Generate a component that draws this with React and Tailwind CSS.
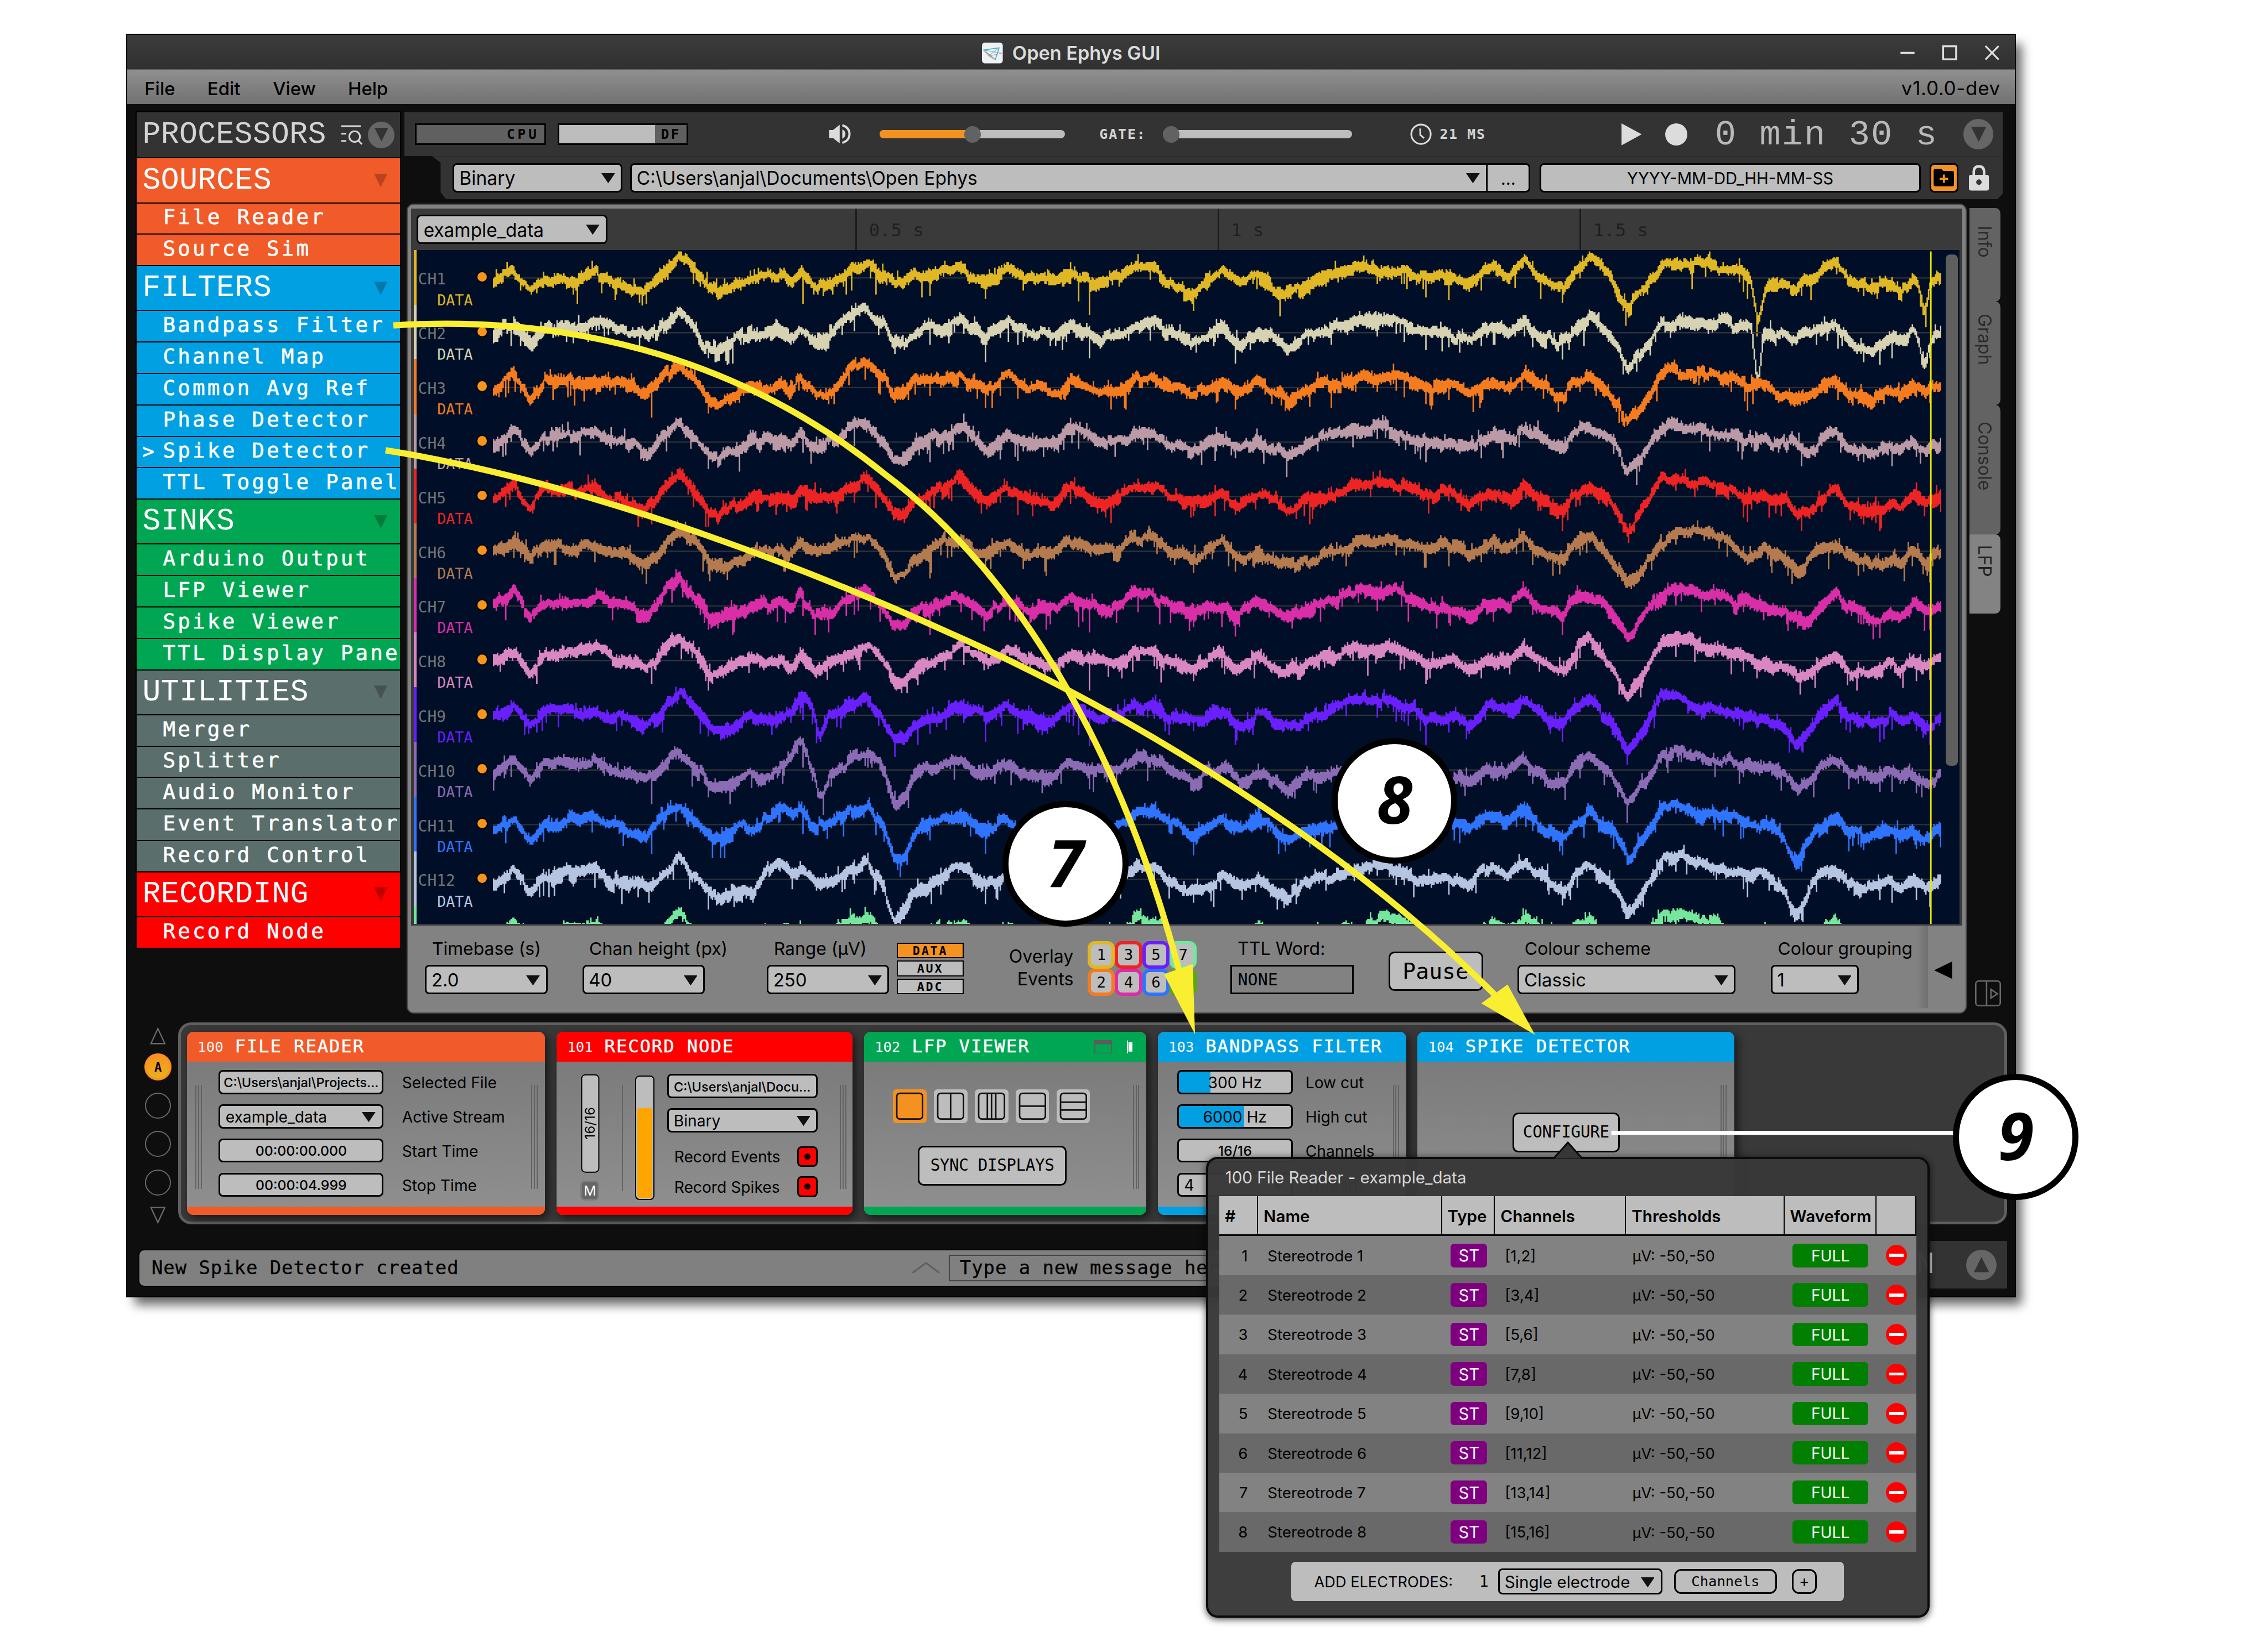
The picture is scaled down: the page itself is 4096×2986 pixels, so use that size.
import React from "react";

const inter = "font-['Inter',sans-serif]";
const mono = "font-['DejaVu_Sans_Mono',monospace]";
const thin = "font-['Liberation_Mono',monospace]";

const Tri = ({ className = "", dir = "down" }) => {
  const pts = {
    down: "0,0 10,0 5,10",
    up: "0,10 10,10 5,0",
    left: "10,0 10,10 0,5",
    right: "0,0 0,10 10,5",
  };
  return (
    <svg viewBox="0 0 10 10" preserveAspectRatio="none" className={"shrink-0 " + className} fill="currentColor">
      <polygon points={pts[dir]} />
    </svg>
  );
};

const Combo = ({ className = "", children }) => (
  <div className={`${inter} flex shrink-0 items-center justify-between rounded-[3px] border-[1.2px] border-black bg-[#bdbdbd] pt-[0.8px] text-black ${className}`}>
    <span className="whitespace-nowrap">{children}</span>
    <Tri className="h-[7px] w-[9.5px] text-[#111]" />
  </div>
);

const Field = ({ className = "", children }) => (
  <div className={`${inter} flex shrink-0 items-center justify-center overflow-hidden whitespace-nowrap rounded-[3px] border-[1.2px] border-black bg-[#bdbdbd] pt-[0.8px] text-black ${className}`}>
    {children}
  </div>
);

/* ---------- processor list ---------- */
const GROUPS = [
  { name: "SOURCES", bg: "bg-[#f15a29]", tri: "text-[#b8441f]", items: ["File Reader", "Source Sim"] },
  {
    name: "FILTERS", bg: "bg-[#00a0e3]", tri: "text-[#0079aa]",
    items: ["Bandpass Filter", "Channel Map", "Common Avg Ref", "Phase Detector", "Spike Detector", "TTL Toggle Panel"],
  },
  { name: "SINKS", bg: "bg-[#00a651]", tri: "text-[#007d3d]", items: ["Arduino Output", "LFP Viewer", "Spike Viewer", "TTL Display Panel"] },
  { name: "UTILITIES", bg: "bg-[#5a6e6c]", tri: "text-[#445351]", items: ["Merger", "Splitter", "Audio Monitor", "Event Translator", "Record Control"] },
  { name: "RECORDING", bg: "bg-[#ff0000]", tri: "text-[#bf0000]", items: ["Record Node"] },
];

const Sidebar = () => (
  <div className="mt-[5px] flex h-[579.2px] w-[183.7px] shrink-0 flex-col overflow-hidden border-x-[0.8px] border-t-[0.8px] border-black bg-black">
    <div className="flex h-[31px] shrink-0 items-center bg-[#333] pl-[4px]">
      <span className={`${thin} w-[138px] text-[21px] leading-none tracking-[0.12px] text-[#d4d4d4]`}>PROCESSORS</span>
      <svg viewBox="0 0 15 14" className="-ml-[0.5px] h-[14px] w-[15px] shrink-0" fill="none" stroke="#d4d4d4" strokeWidth="1.2">
        <path d="M0 .8H13.5M0 6H3.4M0 11H3.4" />
        <circle cx="9.2" cy="8" r="3.7" />
        <path d="M11.8 10.8L14.3 13.3" />
      </svg>
      <span className="ml-[3.4px] flex size-[18.6px] items-center justify-center rounded-full bg-[#666]">
        <Tri className="h-[9.5px] w-[9.5px] text-[#333]" />
      </span>
    </div>
    {GROUPS.map((g) => (
      <React.Fragment key={g.name}>
        <div className={`mt-[0.8px] flex h-[30.3px] shrink-0 items-center justify-between pl-[4px] pr-[8.5px] ${g.bg}`}>
          <span className={`${thin} text-[21px] leading-none tracking-[0.18px] text-white`}>{g.name}</span>
          <Tri className={`h-[9.3px] w-[9.3px] ${g.tri}`} />
        </div>
        {g.items.map((it) => (
          <div key={it} className={`mt-[0.8px] flex h-[20.95px] shrink-0 items-center overflow-hidden pb-[1.4px] ${g.bg}`}>
            <span className={`${mono} w-[18.2px] shrink-0 pl-[4px] text-[13.5px] leading-none text-white [-webkit-text-stroke:0.3px_white]`}>{it === "Spike Detector" ? ">" : ""}</span>
            <span className={`${mono} whitespace-nowrap text-[14.4px] leading-none tracking-[1.58px] text-white [-webkit-text-stroke:0.25px_white]`}>{it}</span>
          </div>
        ))}
      </React.Fragment>
    ))}
  </div>
);

/* ---------- control panel ---------- */
const Pixel = ({ className = "", children }) => (
  <span className={`${mono} whitespace-nowrap font-bold leading-none ${className}`}>{children}</span>
);

const ControlPanel = () => (
  <div className="mt-[5.6px] flex flex-col">
    <div className="flex h-[30.4px] w-[1106px] items-center bg-[#333] pl-[7.4px]">
      <div className="flex h-[14.8px] w-[90.5px] items-center justify-end border-[1.2px] border-black bg-[#606060] pr-[3.5px] pt-[0.6px]">
        <Pixel className="text-[9.3px] tracking-[1.9px] text-black">CPU</Pixel>
      </div>
      <div className="ml-[8px] flex h-[14.8px] w-[90.5px] items-center justify-between border-[1.2px] border-black bg-[#606060] pr-[4px]">
        <div className="h-full w-[66.5px] bg-[#bdbdbd]" />
        <Pixel className="pt-[0.6px] text-[9.3px] tracking-[1.3px] text-black">DF</Pixel>
      </div>
      <svg viewBox="0 0 15 14" className="ml-[97.5px] h-[14px] w-[15px] shrink-0">
        <path d="M0 4.2H2.6L7.2 0.6V13.4L2.6 9.8H0Z" fill="#dcdcdc" />
        <path d="M9 3.8Q11.2 5 11.2 7T9 10.2Z" fill="#dcdcdc" />
        <path d="M9 .9Q14 2.4 14 7T9 13.1" fill="none" stroke="#dcdcdc" strokeWidth="1.5" />
      </svg>
      <div className="ml-[20px] flex h-[6px] w-[128.2px] items-center overflow-visible rounded-full bg-[#bdbdbd]">
        <div className="h-full w-[60px] rounded-l-full bg-[#f39220]" />
        <div className="-ml-[1.5px] size-[11.4px] shrink-0 rounded-full bg-[#626262]" />
      </div>
      <Pixel className="ml-[23.8px] w-[44px] pt-[0.8px] text-[9.5px] tracking-[0.75px] text-[#d4d4d4]">GATE:</Pixel>
      <div className="flex h-[6px] w-[131px] items-center rounded-full bg-[#bdbdbd]">
        <div className="size-[11.4px] shrink-0 rounded-full bg-[#626262]" />
      </div>
      <svg viewBox="0 0 15 15" className="ml-[40px] size-[15px] shrink-0" fill="none" stroke="#dcdcdc" strokeWidth="1.2">
        <circle cx="7.5" cy="7.5" r="6.7" />
        <path d="M7 3.5V8L9.6 10.3" />
      </svg>
      <Pixel className="ml-[5.5px] w-[125.8px] pt-[0.8px] text-[9.5px] tracking-[0.65px] text-[#d4d4d4]">21 MS</Pixel>
      <Tri dir="right" className="h-[15.2px] w-[14px] text-[#dcdcdc]" />
      <div className="ml-[16.4px] size-[15.2px] shrink-0 rounded-full bg-[#dcdcdc]" />
      <span className={`${thin} ml-[19px] w-[172px] whitespace-pre pt-[2px] text-[24.4px] leading-none tracking-[0.8px] text-[#b9b9b9]`}>0 min 30 s</span>
      <span className="flex size-[20.8px] shrink-0 items-center justify-center rounded-full bg-[#666]">
        <Tri className="h-[10.5px] w-[10.5px] text-[#333]" />
      </span>
    </div>
    <div className="flex h-[29.9px] w-[1106px] items-center bg-[#333] pl-[33.3px] [clip-path:polygon(19px_0,1106px_0,1106px_26px,1102px_29.9px,29px_29.9px,25px_25px,25px_4.5px)]">
      <Combo className="h-[20.2px] w-[117.4px] pl-[3.5px] pr-[4px] text-[12.9px]">Binary</Combo>
      <Combo className="ml-[5.3px] h-[20.2px] w-[593.4px] rounded-r-none pl-[3.5px] pr-[4px] text-[12.85px]">C:\Users\anjal\Documents\Open Ephys</Combo>
      <Field className="-ml-[1px] h-[20.2px] w-[30.7px] rounded-l-none pt-[1.6px] text-[12px]">...</Field>
      <Field className="ml-[6.3px] h-[20.2px] w-[264px] text-[11.2px]">YYYY-MM-DD_HH-MM-SS</Field>
      <div className="ml-[5.8px] flex h-[20.2px] w-[19.9px] items-center justify-center rounded-[3px] border-[1.2px] border-black bg-[#f39220]">
        <svg viewBox="0 0 14 12" className="h-[12.2px] w-[14.4px]">
          <path d="M1.5 0H5.2L6.6 1.5H12.5Q14 1.5 14 3V10.5Q14 12 12.5 12H1.5Q0 12 0 10.5V1.5Q0 0 1.5 0Z" fill="#000" />
          <path d="M7 4V9.6M4.2 6.8H9.8" stroke="#f39220" strokeWidth="1.4" />
        </svg>
      </div>
      <svg viewBox="0 0 14 18" className="ml-[7px] h-[17.8px] w-[14.6px]">
        <path d="M3.4 8V5Q3.4 1 7 1T10.6 5V8" fill="none" stroke="#dcdcdc" strokeWidth="1.8" />
        <path d="M1.4 7H12.6Q14 7 14 8.4V16.4Q14 18 12.6 18H1.4Q0 18 0 16.4V8.4Q0 7 1.4 7ZM7 10.2A1.9 1.9 0 1 0 7 14A1.9 1.9 0 1 0 7 10.2Z" fill="#dcdcdc" fillRule="evenodd" />
      </svg>
    </div>
  </div>
);

/* ---------- LFP traces ---------- */
const COLORS = ["#e0b724", "#d6d2b2", "#f57b1f", "#bb9aa5", "#ee2424", "#b57b4f", "#da2ea8", "#d987c2", "#6a1fff", "#8c6bb5", "#2f74ff", "#b5c4e1", "#75e79d"];
const LABEL = ["text-[#e0b724]", "text-[#d6d2b2]", "text-[#f57b1f]", "text-[#bb9aa5]", "text-[#ee2424]", "text-[#b57b4f]", "text-[#da2ea8]", "text-[#d987c2]", "text-[#6a1fff]", "text-[#8c6bb5]", "text-[#2f74ff]", "text-[#b5c4e1]"];
const STRIP = ["bg-[#e0b724]", "bg-[#d6d2b2]", "bg-[#f57b1f]", "bg-[#bb9aa5]", "bg-[#ee2424]", "bg-[#b57b4f]", "bg-[#da2ea8]", "bg-[#d987c2]", "bg-[#6a1fff]", "bg-[#8c6bb5]", "bg-[#2f74ff]", "bg-[#b5c4e1]", "bg-[#75e79d]"];

/* field-potential key points: [position, deflection] pairs for each half of the sweep */
const LEFT = [20, 10, 65, -30, 100, 38, 130, -10, 165, -12, 200, -20, 240, -28, 270, 0, 300, 8, 350, 38, 385, -20, 420, -75, 450, -25, 490, 55, 515, 48, 550, 18, 580, 0, 640, -5, 660, 12, 680, -25, 715, 22, 750, 10, 790, -35, 825, -52, 860, 10, 880, 70, 905, 65, 925, 20, 960, 0, 990, -20, 1025, -35, 1055, -5, 1080, 15, 1125, -28, 1160, 5, 1200, 0, 1230, 15, 1260, -25, 1290, -10, 1330, 15, 1370, 0, 1400, -30, 1440, -35, 1470, 5, 1520, 35];
const RIGHT = [0, 10, 25, -15, 60, 30, 95, -10, 120, 15, 155, 50, 200, 10, 240, -10, 280, -30, 345, -42, 390, -20, 430, 5, 470, 0, 505, 22, 550, -25, 585, 0, 613, -50, 645, 5, 690, 32, 710, -20, 740, -52, 780, 10, 815, 108, 845, 50, 880, -42, 915, -58, 960, -38, 1000, -30, 1040, -10, 1090, 0, 1120, 15, 1145, 70, 1165, 45, 1190, -5, 1220, -35, 1245, 20, 1290, 42, 1325, 12, 1345, 30, 1370, 0, 1395, 35, 1412, 15, 1426, 0];
const KEYS = [];
for (let i = 0; i < LEFT.length; i += 2) KEYS.push([334.5 + LEFT[i] * 0.32222, LEFT[i + 1] * 0.2022]);
for (let i = 0; i < RIGHT.length; i += 2) KEYS.push([836.3 + RIGHT[i] * 0.35556, RIGHT[i + 1] * 0.2022]);

/* per-channel [centre x, half width, offset] adjustments */
const BUMPS = [
  [[593, 14, 4], [622, 14, -10], [1216, 4, 28], [1226, 8, 6], [1245, 8, -8], [1331, 3, 16], [1165, 20, 2]],
  [[593, 16, -3], [622, 14, -7], [1216, 2.5, 32], [1245, 8, -10], [1331, 4, 14]],
  [[594, 12, -9], [622, 14, -7], [1243, 8, -8]],
  [[595, 14, -2], [665, 5, -5], [1243, 8, -10]],
  [[665, 6, -6], [1205, 4, 4], [1243, 8, -6]],
  [[622, 10, 0], [1205, 6, 4], [1243, 8, -3]],
  [[470, 12, -3], [352, 14, -3], [1250, 10, 4], [1243, 6, -6]],
  [[1165, 18, -2], [1243, 8, -5]],
  [[555, 8, -11], [567, 3, 12], [1243, 7, 3], [1150, 16, -3]],
  [[552, 9, -14], [568, 4, 12], [621, 8, 10], [528, 8, 6], [1243, 7, 3]],
  [[541, 14, -9], [621, 8, 12], [524, 7, 8], [1241, 8, 10]],
  [[538, 9, -12], [619, 7, 10], [520, 8, 8], [1241, 8, 11], [1155, 20, -6]],
  [[1155, 24, -6]],
];

const rng = (seed) => () => {
  seed = (seed * 1664525 + 1013904223) >>> 0;
  return seed / 4294967296;
};

const X0 = 341.2;
const STEP = 0.935;
const COLS = 1072;

const shared = (() => {
  const r = rng(77);
  const spikes = new Array(COLS).fill(0);
  for (let i = 0; i < COLS; i++) if (r() < 0.04) spikes[i] = 6 + r() * r() * 14;
  return spikes;
})();

const tracePath = (ch) => {
  const r = rng(9001 + ch * 733);
  const cy = 19.3 + ch * 37.83;
  const q = (v) => (Math.round(v / STEP) * STEP).toFixed(2);
  let k = 0, slow = 0, mid = 0, hold = 0, top = 0, bottom = 0, plo = null, phi = null, d = "";
  for (let i = 0; i < COLS; i++) {
    const x = X0 + i * STEP;
    while (k < KEYS.length - 2 && KEYS[k + 1][0] < x) k++;
    const [xa, ya] = KEYS[k], [xb, yb] = KEYS[k + 1];
    const f = Math.min(1, Math.max(0, (x - xa) / (xb - xa)));
    let y = ya + (yb - ya) * f;
    for (const [bx, bw, bo] of BUMPS[ch]) y += bo * Math.exp(-(((x - bx) / bw) ** 2));
    slow = slow * 0.95 + (r() - 0.5) * 2.0;
    if (hold-- <= 0) {
      hold = 2 + Math.floor(r() * 8);
      mid = (r() - 0.5) * 4.2;
      top = r() * 2.2;
      bottom = r() * r() * 5;
    }
    y += slow + mid;
    let lo = y - 1.8 - top - r() * r() * 2.6;
    let hi = y + 1.6 + bottom + r() * r() * 2.6;
    if (shared[i] && r() < 0.55) hi += shared[i] * (0.5 + r() * 0.6);
    else if (r() < 0.05) hi += 3 + r() * 8;
    if (r() < 0.04) lo -= 1.5 + r() * 3.5;
    const nlo = lo, nhi = hi;
    if (plo !== null) {
      if (lo > phi) lo = phi;
      if (hi < plo) hi = plo;
    }
    plo = nlo;
    phi = nhi;
    d += `M${((i + 0.5) * STEP).toFixed(2)} ${q(cy + lo)}V${q(cy + hi)}`;
  }
  return d;
};
const PATHS = COLORS.map((_, i) => tracePath(i));

const ChannelLabels = () => (
  <div className="flex h-[466.3px] w-[53px] flex-col overflow-hidden">
    {LABEL.map((c, i) => (
      <div key={i} className="flex h-[37.83px] shrink-0 flex-col pt-[15.2px]">
        <div className="flex h-[12px] items-center justify-between">
          <span className={`${mono} pl-[1px] text-[10.7px] leading-none text-[#737578]`}>CH{i + 1}</span>
          <span className="mr-[3.6px] size-[8.2px] -translate-y-[1.9px] rounded-full border-[0.8px] border-black bg-[#f7941e]" />
        </div>
        <span className={`${mono} mt-[3.9px] pl-[14.3px] text-[10.2px] leading-none ${c}`}>DATA</span>
      </div>
    ))}
  </div>
);

const Viewer = () => (
  <div className="flex h-[496px] w-[1073.3px] flex-col bg-[#3a3a3a]">
    <div className="flex h-[28.5px] shrink-0 items-center pl-[4px]">
      <Combo className="h-[20px] w-[132px] pl-[3.5px] pr-[4.5px] text-[12.8px]">example_data</Combo>
      <div className={`${mono} ml-[171.4px] flex h-full w-[930px] text-[12.3px] leading-none tracking-[0.2px] text-[#1f1f1f]`}>
        {["0.5 s", "1 s", "1.5 s"].map((t) => (
          <div key={t} className="flex h-full w-[250.6px] shrink-0 items-center border-l-[1.4px] border-[#1c1c1c] pl-[8.3px] pt-[1px]">{t}</div>
        ))}
      </div>
    </div>
    <div className="ml-[2px] flex h-[466.3px] w-[1069.4px] overflow-hidden bg-[#000f27]">
      <div className="flex w-[1.8px] shrink-0 flex-col">
        {STRIP.map((s, i) => (
          <div key={i} className={`h-[37.83px] shrink-0 ${s}`} />
        ))}
      </div>
      <ChannelLabels />
      <svg viewBox="0 0 1002 466.3" className="h-[466.3px] w-[1002px] shrink-0">
        {COLORS.map((c, i) => (
          <React.Fragment key={c}>
            <path d={`M0 ${19.3 + i * 37.83}H1002`} stroke="#2e3237" strokeWidth="0.9" />
            <path d={PATHS[i]} stroke={c} strokeWidth="1" fill="none" />
          </React.Fragment>
        ))}
        <path d="M995 1V466.3" stroke="#e8e800" strokeWidth="1.1" />
      </svg>
      <div className="ml-[3px] mt-[3px] h-[354px] w-[8.6px] rounded-[3px] bg-[#5e5e5e]" />
    </div>
  </div>
);

const EVENT_BTN = [
  ["1", "border-[#e0b724]"], ["3", "border-[#ee2424]"], ["5", "border-[#6a1fff]"], ["7", "border-[#75e79d]"],
  ["2", "border-[#f57b1f]"], ["4", "border-[#da2ea8]"], ["6", "border-[#2f74ff]"], ["8", "border-[#5aaa00]"],
];

const LabeledCombo = ({ label, value, w, ml }) => (
  <div className={`flex shrink-0 flex-col pt-[8.3px] ${ml}`}>
    <span className={`${inter} h-[19px] whitespace-nowrap pl-[4.8px] text-[12.2px] leading-[15px] text-black`}>{label}</span>
    <Combo className={`h-[20.3px] pl-[3.3px] pr-[4px] text-[12.6px] ${w}`}>{value}</Combo>
  </div>
);

const ViewerControls = () => (
  <div className="flex h-[60px] w-[1075px] items-start overflow-hidden">
    <LabeledCombo label="Timebase (s)" value="2.0" w="w-[84.7px]" ml="ml-[9.7px]" />
    <LabeledCombo label="Chan height (px)" value="40" w="w-[84.7px]" ml="w-[84.7px] ml-[24.1px]" />
    <LabeledCombo label="Range (µV)" value="250" w="w-[84.7px]" ml="ml-[43px]" />
    <div className="ml-[5.3px] mt-[11.8px] flex shrink-0 flex-col gap-[1.5px]">
      {[["DATA", "bg-[#f39220]"], ["AUX", "bg-[#bdbdbd]"], ["ADC", "bg-[#bdbdbd]"]].map(([t, bg]) => (
        <div key={t} className={`flex h-[10.9px] w-[46.2px] items-center justify-center border-[1px] border-black pt-[0.6px] ${bg}`}>
          <Pixel className="text-[8.3px] tracking-[1.1px] text-black">{t}</Pixel>
        </div>
      ))}
    </div>
    <div className={`${inter} ml-[24px] mt-[13.8px] flex w-[52px] shrink-0 flex-col text-right text-[12.3px] leading-[15.5px] text-black`}>
      <span>Overlay</span>
      <span>Events</span>
    </div>
    <div className="ml-[9.8px] mt-[10.8px] grid shrink-0 grid-cols-4">
      {EVENT_BTN.map(([n, b]) => (
        <div key={n} className={`flex h-[18.9px] w-[18.9px] items-center justify-center rounded-[5px] border-[2.6px] bg-[#bdbdbd] ${b}`}>
          <span className={`${mono} text-[10.5px] leading-none text-black`}>{n}</span>
        </div>
      ))}
    </div>
    <div className="ml-[23.2px] flex shrink-0 flex-col pt-[8.3px]">
      <span className={`${inter} h-[19px] whitespace-nowrap pl-[5px] text-[12.3px] leading-[15px] text-black`}>TTL Word:</span>
      <div className={`${mono} flex h-[20.3px] w-[85.3px] items-center border-[1.2px] border-black pl-[4px] text-[11.5px] text-black`}>NONE</div>
    </div>
    <div className={`${mono} ml-[24px] mt-[18px] flex h-[27.2px] w-[65.5px] shrink-0 items-center justify-center rounded-[4px] border-[1.2px] border-black bg-[#bdbdbd] text-[15.2px] text-black`}>Pause</div>
    <LabeledCombo label="Colour scheme" value="Classic" w="w-[150.7px]" ml="ml-[24px]" />
    <LabeledCombo label="Colour grouping" value="1" w="w-[60.8px]" ml="ml-[24.5px] w-[101px]" />
    <div className="h-[57px] w-[7.6px] bg-linear-to-r from-[#828282] to-[#707070]" />
    <Tri dir="left" className="ml-[4.5px] mt-[25px] h-[12px] w-[12.5px] text-black" />
  </div>
);

const TABS = [
  ["Info", "h-[64.6px] pt-[12.5px] bg-[#636363] text-[#2a2a2a]"],
  ["Graph", "h-[71.7px] pt-[8.5px] bg-[#636363] text-[#2a2a2a]"],
  ["Console", "h-[89.8px] pt-[11.5px] bg-[#636363] text-[#2a2a2a]"],
  ["LFP", "h-[54.5px] pt-[7px] bg-[#838383] text-[#1f1f1f]"],
];

const RightTabs = () => (
  <div className="flex w-[25px] flex-col pl-[1.2px] pt-[3px]">
    {TABS.map(([t, c]) => (
      <div key={t} className={`${inter} w-[23.2px] rounded-r-[4px] border-y-[0.8px] border-[#0e0e0e] pr-[1px] text-[12.3px] leading-[21px] [writing-mode:vertical-rl] ${c}`}>{t}</div>
    ))}
    <svg viewBox="0 0 18 18" className="ml-[4.5px] mt-[254px] size-[18px]" fill="none" stroke="#6a6a6a" strokeWidth="1">
      <rect x="0.5" y="0.5" width="17" height="17" rx="2" />
      <path d="M8 .5V17.5M11 6.2V12.3L15.5 9.3Z" />
    </svg>
  </div>
);

/* ---------- signal chain ---------- */
const Grip = ({ className = "" }) => (
  <div className={`flex h-[72px] justify-between border-x-[0.8px] border-[#626262] ${className}`}>
    <div className="mx-auto w-[0.8px] bg-[#626262]" />
  </div>
);

const Module = ({ id, title, color, width, extra, children }) => (
  <div className={`flex h-[126.8px] shrink-0 flex-col overflow-hidden rounded-[4.5px] bg-linear-to-b from-[#777] to-[#909090] shadow-[2px_2px_6px_rgba(0,0,0,0.6)] ${width}`}>
    <div className={`flex h-[20.8px] shrink-0 items-center pb-[0.8px] pl-[7.4px] text-white ${color}`}>
      <span className={`${mono} pt-[1.4px] text-[9.8px] leading-none`}>{id}</span>
      <span className={`${mono} ml-[8px] whitespace-nowrap text-[12.4px] leading-none tracking-[0.7px] [-webkit-text-stroke:0.2px_white]`}>{title}</span>
      {extra}
    </div>
    <div className="flex flex-1 overflow-hidden">{children}</div>
    <div className={`h-[5.8px] shrink-0 ${color}`} />
  </div>
);

const FieldLabel = ({ children }) => (
  <span className={`${inter} flex h-[16.7px] items-center whitespace-nowrap pt-[0.8px] text-[10.8px] leading-none text-black`}>{children}</span>
);

const RecButton = () => (
  <div className="flex h-[14.3px] w-[14.2px] items-center justify-center rounded-[3px] border-[1.3px] border-black bg-[#ff0000]">
    <div className="size-[4.2px] rounded-full bg-black" />
  </div>
);

const LayoutIcon = ({ active, d }) => (
  <div className={`flex h-[23.6px] w-[23.2px] items-center justify-center rounded-[2.5px] ${active ? "bg-[#f39220]" : "bg-[#bdbdbd]"}`}>
    <svg viewBox="0 0 20 20" className="size-[19.4px]" fill="none" stroke="#111" strokeWidth="1.1">
      <rect x="0.8" y="0.8" width="18.4" height="18.4" rx="2.2" />
      {d && <path d={d} />}
    </svg>
  </div>
);

const SignalChain = () => (
  <div className="mt-[6px] flex h-[139.8px] pl-[11px]">
    <div className="flex w-[20.8px] shrink-0 flex-col items-center pt-[3.4px]">
      <svg viewBox="0 0 11 12" className="h-[11.8px] w-[11px]" fill="none" stroke="#6a6a6a" strokeWidth="0.9"><path d="M5.5 .8L10.4 11.4H.6Z" /></svg>
      <div className="mt-[6.3px] flex size-[18.8px] items-center justify-center rounded-full border-[1.6px] border-[#fb9022] bg-linear-to-b from-[#f9931f] to-[#e8b021]">
        <Pixel className="text-[8.5px] text-black">A</Pixel>
      </div>
      <div className="mt-[8.3px] size-[18px] rounded-full border-[0.9px] border-[#6a6a6a]" />
      <div className="mt-[8.5px] size-[18px] rounded-full border-[0.9px] border-[#6a6a6a]" />
      <div className="mt-[8.5px] size-[18px] rounded-full border-[0.9px] border-[#6a6a6a]" />
      <svg viewBox="0 0 11 12" className="mt-[8px] h-[11.8px] w-[11px]" fill="none" stroke="#6a6a6a" strokeWidth="0.9"><path d="M5.5 11.2L10.4 .6H.6Z" /></svg>
    </div>
    <div className="ml-[3.4px] flex w-[1265.5px] gap-[7.95px] rounded-[9px] border-[2.1px] border-[#606060] bg-[#393939] pl-[4.3px] pt-[4.4px]">
      <Module id="100" title="FILE READER" color="bg-[#f15a29]" width="w-[247.8px]">
        <Grip className="ml-[5.8px] mt-[16px] w-[4.5px]" />
        <div className="ml-[11.7px] flex flex-col gap-[7px] pt-[5.8px]">
          <Field className="h-[16.7px] w-[114px] text-[9px] font-medium">C:\Users\anjal\Projects...</Field>
          <Combo className="h-[16.7px] w-[114px] pl-[3.5px] pr-[4.5px] text-[10.8px]">example_data</Combo>
          <Field className="h-[16.7px] w-[114px] text-[9.5px] font-medium">00:00:00.000</Field>
          <Field className="h-[16.7px] w-[114px] text-[9.5px] font-medium">00:00:04.999</Field>
        </div>
        <div className="ml-[12.8px] flex w-[89.5px] flex-col gap-[7px] pt-[5.8px]">
          {["Selected File", "Active Stream", "Start Time", "Stop Time"].map((t) => <FieldLabel key={t}>{t}</FieldLabel>)}
        </div>
        <Grip className="mt-[16px] w-[4.5px]" />
      </Module>

      <Module id="101" title="RECORD NODE" color="bg-[#ff0000]" width="w-[204.8px]">
        <div className="ml-[16.7px] flex w-[12.8px] flex-col items-center pt-[9px]">
          <div className={`${inter} flex h-[68px] w-[12.8px] rotate-180 items-center justify-center rounded-[3px] border-[1px] border-black bg-[#bdbdbd] text-[9.3px] leading-[11px] text-black [writing-mode:vertical-rl]`}>16/16</div>
          <div className="mt-[5.5px] flex h-[13.5px] w-[13px] items-center justify-center rounded-[3px] border-[1.5px] border-[#7c7c7c] bg-[#666]">
            <span className={`${inter} text-[9.5px] leading-none text-white`}>M</span>
          </div>
        </div>
        <div className="ml-[15.7px] mt-[16px] h-[73.5px] w-[0.8px] bg-[#626262]" />
        <div className="ml-[8.4px] mt-[9.7px] flex h-[86px] w-[13.2px] flex-col justify-end rounded-[3px] border-[1px] border-black bg-[#bdbdbd] p-[0.8px]">
          <div className="h-[62px] rounded-[1.5px] bg-[#ffa500]" />
        </div>
        <div className="ml-[8.8px] flex w-[104.2px] flex-col pt-[8.6px]">
          <Field className="h-[16.8px] w-[104.2px] text-[9px] font-medium">C:\Users\anjal\Docu...</Field>
          <Combo className="mt-[6.8px] h-[16.8px] w-[104.2px] pl-[3.5px] pr-[4px] text-[10.8px]">Binary</Combo>
          <div className="mt-[9.6px] flex h-[14.2px] items-center justify-between pl-[5px]"><FieldLabel>Record Events</FieldLabel><RecButton /></div>
          <div className="mt-[6.6px] flex h-[14.2px] items-center justify-between pl-[5px]"><FieldLabel>Record Spikes</FieldLabel><RecButton /></div>
        </div>
        <Grip className="ml-[15.3px] mt-[16px] w-[4.5px]" />
      </Module>

      <Module
        id="102" title="LFP VIEWER" color="bg-[#00a651]" width="w-[195.3px]"
        extra={
          <div className="ml-auto flex items-center pr-[9px] pt-[1px]">
            <svg viewBox="0 0 13 10" className="h-[9.5px] w-[13px]"><path d="M.4 1.6H12.6V9.6H.4Z" fill="none" stroke="#5c5c5c" strokeWidth="0.9" /><path d="M0 0H13V3H0Z" fill="#5c5c5c" /></svg>
            <svg viewBox="0 0 5 10" className="ml-[10px] h-[9.5px] w-[4.5px]"><path d="M.4 0V10" stroke="#fff" strokeWidth="0.8" /><path d="M1.2 1.4H4.2V8.6H1.2Z" fill="#fff" /></svg>
          </div>
        }
      >
        <div className="flex w-[186px] flex-col pt-[19px]">
          <div className="ml-[20px] flex gap-[5.1px]">
            <LayoutIcon active />
            <LayoutIcon d="M10 .8V19.2" />
            <LayoutIcon d="M7 .8V19.2M10 .8V19.2M13 .8V19.2" />
            <LayoutIcon d="M.8 10H19.2" />
            <LayoutIcon d="M.8 7.2H19.2M.8 12.8H19.2" />
          </div>
          <div className={`${mono} ml-[37.3px] mt-[15.8px] flex h-[27.2px] w-[102.8px] items-center justify-center rounded-[4px] border-[1.2px] border-black bg-[#bdbdbd] text-[11.2px] tracking-[-0.15px] text-black`}>SYNC DISPLAYS</div>
        </div>
        <Grip className="mt-[16px] w-[4.5px]" />
      </Module>

      <Module id="103" title="BANDPASS FILTER" color="bg-[#00a0e3]" width="w-[171.8px]">
        <div className="ml-[13.5px] flex flex-col gap-[7px] pt-[5.8px]">
          <Field className="h-[16.7px] w-[79.8px] bg-[linear-gradient(to_right,#00a0e3_28%,#bdbdbd_28%)] text-[10.8px]">300 Hz</Field>
          <Field className="h-[16.7px] w-[79.8px] bg-[linear-gradient(to_right,#00a0e3_58%,#bdbdbd_58%)] text-[10.8px]">6000 Hz</Field>
          <Field className="h-[16.7px] w-[79.8px] text-[9.5px] font-medium">16/16</Field>
          <Combo className="h-[16.7px] w-[79.8px] pl-[3.5px] pr-[4.5px] text-[10.8px]">4</Combo>
        </div>
        <div className="ml-[8.9px] flex w-[60.4px] flex-col gap-[7px] pt-[5.8px]">
          {["Low cut", "High cut", "Channels", "Threads"].map((t) => <FieldLabel key={t}>{t}</FieldLabel>)}
        </div>
        <Grip className="mt-[16px] w-[4.5px]" />
      </Module>

      <Module id="104" title="SPIKE DETECTOR" color="bg-[#00a0e3]" width="w-[219.3px]">
        <div className={`${mono} ml-[65.8px] mt-[35.3px] flex h-[27.4px] w-[74px] items-center justify-center rounded-[4px] border-[1.2px] border-black bg-[#bdbdbd] text-[11.2px] tracking-[-0.1px] text-black`}>CONFIGURE</div>
        <Grip className="ml-[69.7px] mt-[16px] w-[4.5px]" />
      </Module>
    </div>
  </div>
);

const StatusBar = () => (
  <div className="mt-[11.4px] flex h-[33px] items-center pl-[7.8px]">
    <div className="mt-[4.4px] flex h-[26px] w-[1040px] items-center rounded-[4px] border-[1px] border-[#050505] bg-[#808080] pl-[8.3px]">
      <span className={`${mono} w-[524.8px] whitespace-nowrap text-[13px] leading-none tracking-[0.36px] text-black [-webkit-text-stroke:0.15px_black]`}>New Spike Detector created</span>
      <svg viewBox="0 0 22 9" className="h-[8px] w-[22px]" fill="none" stroke="#5f5f5f" strokeWidth="1.3"><path d="M.5 8.5L11 .8L21.5 8.5" /></svg>
      <div className={`${mono} ml-[4.7px] flex h-[18.5px] w-[470px] items-center whitespace-nowrap border-[1px] border-[#444] pl-[7px] text-[13px] leading-none tracking-[0.36px] text-black [-webkit-text-stroke:0.15px_black]`}>Type a new message here</div>
    </div>
    <div className="ml-[6px] flex h-[33px] w-[247px] items-center justify-end bg-[#333] pr-[7.2px]">
      <span className={`${thin} text-[21px] leading-none text-[#c9c9c9]`}>SIGNAL CHAIN</span>
      <span className="ml-[22px] flex size-[21px] items-center justify-center rounded-full bg-[#666]">
        <Tri dir="up" className="h-[10.5px] w-[10.5px] text-[#333]" />
      </span>
    </div>
  </div>
);

/* ---------- electrode popup ---------- */
const CHANNELS = ["[1,2]", "[3,4]", "[5,6]", "[7,8]", "[9,10]", "[11,12]", "[13,14]", "[15,16]"];
const HEAD = [["#", "w-[26.9px] pl-[4px]"], ["Name", "w-[127.3px]"], ["Type", "w-[36.7px]"], ["Channels", "w-[90.7px]"], ["Thresholds", "w-[109.6px]"], ["Waveform", "w-[63.7px]"], ["", "w-[27.5px]"]];

const Popup = () => (
  <div className={`${inter} absolute left-[834.6px] top-[789.8px] flex w-[500.7px] flex-col`}>
    <svg viewBox="0 0 20 12" className="relative z-10 ml-[240.3px] h-[12px] w-[20px]">
      <path d="M0 12L10 .8L20 12" fill="#373737" stroke="#0a0a0a" strokeWidth="1.2" />
      <path d="M1.4 12H18.6" stroke="#373737" strokeWidth="1.5" />
    </svg>
    <div className="-mt-[1.5px] flex h-[318.9px] flex-col rounded-[8px] border-[1.6px] border-[#0b0b0b] bg-[#383838]/97 px-[7.5px] shadow-[0_1px_5px_rgba(0,0,0,0.7)]">
      <span className="flex h-[25.9px] shrink-0 items-center pl-[4.2px] text-[11.3px] leading-none text-[#d6d6d6]">100 File Reader - example_data</span>
      <div className="flex h-[27.3px] w-[482.4px] shrink-0 border-b-[1.2px] border-black bg-[#bdbdbd]">
        {HEAD.map(([t, w], i) => (
          <div key={i} className={`flex h-full shrink-0 items-center border-r-[1px] border-black pl-[3.8px] pt-[2px] text-[11.35px] font-semibold leading-none text-black ${w}`}>{t}</div>
        ))}
      </div>
      {CHANNELS.map((c, i) => (
        <div key={c} className={`flex h-[27.33px] w-[482.4px] shrink-0 items-center text-[10.6px] leading-none text-black ${i % 2 ? "bg-[#696969]" : "bg-[#828282]"}`}>
          <span className="w-[19.8px] pt-[1px] text-right">{i + 1}</span>
          <span className="w-[126.8px] pl-[13.7px] pt-[1px]">Stereotrode {i + 1}</span>
          <span className="ml-[13.6px] flex h-[16.3px] w-[25.3px] items-center justify-center rounded-[2.5px] bg-[#7f007f] pt-[0.6px] text-[11.2px] text-white">ST</span>
          <span className="w-[88px] pl-[12.2px] pt-[1px]">{c}</span>
          <span className="w-[123.2px] whitespace-nowrap pl-[12.4px] pt-[1px] text-[10.5px]">µV: -50,-50</span>
          <span className="flex h-[16.3px] w-[52.6px] items-center justify-center rounded-[2.5px] bg-[#007f00] pt-[0.6px] text-[10.8px] text-white">FULL</span>
          <span className="ml-[12.2px] flex size-[14.4px] items-center justify-center rounded-full bg-[#ff0000]">
            <span className="h-[2.2px] w-[10px] bg-white" />
          </span>
        </div>
      ))}
      <div className="ml-[49.8px] mt-[7px] flex h-[27.3px] w-[382.6px] shrink-0 items-center rounded-[3px] bg-[#bdbdbd] pl-[16px] text-[11px] leading-none text-black">
        <span className="w-[114px] pt-[0.8px] text-[10.4px]">ADD ELECTRODES:</span>
        <span className={`${mono} w-[13.2px] text-[11px]`}>1</span>
        <Combo className="h-[17.8px] w-[113.7px] pl-[3.4px] pr-[4.4px] text-[11.35px]">Single electrode</Combo>
        <div className={`${mono} ml-[8px] flex h-[17px] w-[71.3px] items-center justify-center rounded-[5px] border-[1.2px] border-black text-[9.8px]`}>Channels</div>
        <div className={`${mono} ml-[10.4px] flex h-[17px] w-[17px] items-center justify-center rounded-[5px] border-[1.2px] border-black text-[10px]`}>+</div>
      </div>
    </div>
  </div>
);

/* ---------- callouts drawn above the window ---------- */
const Badge = ({ n, pos }) => (
  <div className={`absolute flex size-[87px] items-center justify-center rounded-full border-[4.3px] border-black bg-white font-['Open_Sans',sans-serif] text-[45px] font-bold italic leading-none text-black ${pos}`}>
    <span className="-translate-y-[1.2px]">{n}</span>
  </div>
);

const Callouts = () => (
  <>
    <Badge n="7" pos="left-[693.8px] top-[554.3px]" />
    <Badge n="8" pos="left-[921.5px] top-[510.5px]" />
    <svg viewBox="0 0 1568 1143" className="pointer-events-none absolute inset-0 h-full w-full">
      <g fill="none" stroke="#faee31" strokeWidth="4.3">
        <path d="M272.2 225.1C385 218 507 243 611.6 327.5C705 397 776 520 816 672" />
        <path d="M266.8 311.5C395 332 540 385 656.7 437.7C785 494 935 588 1034 688" />
      </g>
      <path d="M805.4 674L825.3 667L826.9 715.5Z" fill="#faee31" />
      <path d="M1025 694.2L1043.2 681.2L1062.2 716Z" fill="#faee31" />
      <path d="M1115 783.8H1355" stroke="#fff" strokeWidth="2.8" />
    </svg>
    <Badge n="9" pos="left-[1351.4px] top-[743.2px]" />
  </>
);

const TitleBar = () => (
  <div className="flex h-[24.7px] shrink-0 items-center border-b-[0.8px] border-[#5f5f5f] bg-linear-to-b from-[#3c3c3c] to-[#303030] pt-[1.4px]">
    <div className="ml-[591.5px] flex w-[633px] items-center">
      <svg viewBox="0 0 14 14" className="size-[14.4px]">
        <rect width="14" height="14" rx="2" fill="#eef2f4" />
        <path d="M1 5L11.5 3.5L9 11.5Z" fill="none" stroke="#35b6d6" strokeWidth="0.6" />
        <path d="M11.5 3.5L4.5 9L13.3 7.2L1 5" fill="none" stroke="#9b9b9b" strokeWidth="0.4" />
        <path d="M1 5L4.5 9L9 11.5" fill="none" stroke="#e9a06a" strokeWidth="0.5" />
      </svg>
      <span className={`${inter} ml-[6.6px] whitespace-nowrap text-[13.1px] font-semibold leading-none text-[#dcdcdc]`}>Open Ephys GUI</span>
    </div>
    <svg viewBox="0 0 70 12" className="ml-[2.2px] h-[12px] w-[70px]" fill="none" stroke="#dedede" strokeWidth="1.3">
      <path d="M.5 6H10.2" strokeWidth="1.5" />
      <rect x="30" y="1.4" width="9" height="9" />
      <path d="M59.3 1.2L68.4 10.6M68.4 1.2L59.3 10.6" />
    </svg>
  </div>
);

const MenuBar = () => (
  <div className={`${inter} flex h-[23.3px] shrink-0 items-center bg-linear-to-b from-[#8f8f8f] to-[#727272] pl-[12px] pt-[1.6px] text-[12.6px] font-medium leading-none text-black`}>
    <span className="w-[43.5px]">File</span>
    <span className="w-[45.3px]">Edit</span>
    <span className="w-[52px]">View</span>
    <span>Help</span>
    <span className="ml-auto pr-[10px] text-[13.4px] font-normal tracking-[0.25px]">v1.0.0-dev</span>
  </div>
);

export default function App() {
  return (
    <div className="relative h-[1143.1px] w-[1568px] overflow-hidden bg-white [zoom:2.61225]">
      <div className="ml-[88px] flex w-[1306.2px] flex-col pt-[24.1px]">
        <div className="flex h-[873px] flex-col bg-[#0e0e0e] shadow-[5px_6px_7px_rgba(0,0,0,0.6)] outline outline-[0.8px] outline-black">
          <TitleBar />
          <MenuBar />
          <div className="flex h-[629.4px] shrink-0 pl-[5.8px]">
            <Sidebar />
            <div className="ml-[2.4px] flex flex-col">
              <ControlPanel />
              <div className="mt-[2.9px] flex pl-[1.3px]">
                <div className="h-[560.4px] w-[1079.6px] rounded-[5px] border-[0.8px] border-[#4a4a4a] bg-[#828282] pl-[2.5px] pt-[2.8px]">
                  <Viewer />
                  <ViewerControls />
                </div>
                <RightTabs />
              </div>
            </div>
          </div>
          <SignalChain />
          <StatusBar />
        </div>
      </div>
      <Popup />
      <Callouts />
    </div>
  );
}
